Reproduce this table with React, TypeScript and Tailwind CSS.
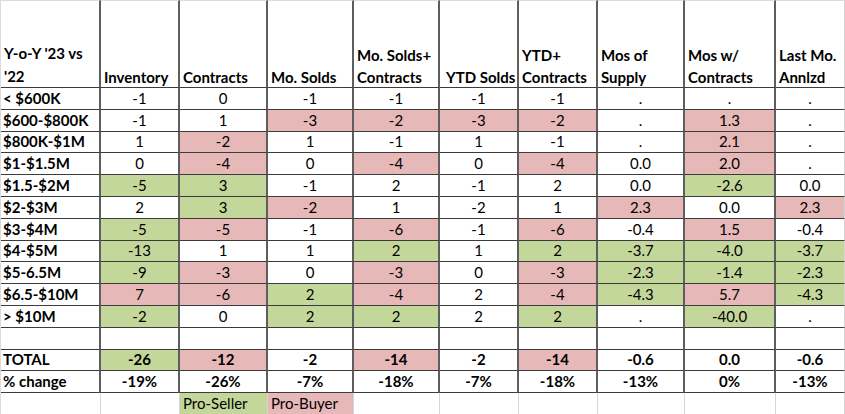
type Fill = '' | 'P' | 'G';
type Cell = [string, Fill];

const headers = [
  'Inventory',
  'Contracts',
  'Mo. Solds',
  'Mo. Solds+\nContracts',
  'YTD Solds',
  'YTD+\nContracts',
  'Mos of\nSupply',
  'Mos w/\nContracts',
  'Last Mo.\nAnnlzd',
];

const rows: { label: string; cells: Cell[]; bold?: boolean }[] = [
  { label: '< $600K', cells: [['-1', ''], ['0', ''], ['-1', ''], ['-1', ''], ['-1', ''], ['-1', ''], ['.', ''], ['.', ''], ['.', '']] },
  { label: '$600-$800K', cells: [['-1', ''], ['1', ''], ['-3', 'P'], ['-2', 'P'], ['-3', 'P'], ['-2', 'P'], ['.', ''], ['1.3', 'P'], ['.', '']] },
  { label: '$800K-$1M', cells: [['1', ''], ['-2', 'P'], ['1', ''], ['-1', ''], ['1', ''], ['-1', ''], ['.', ''], ['2.1', 'P'], ['.', '']] },
  { label: '$1-$1.5M', cells: [['0', ''], ['-4', 'P'], ['0', ''], ['-4', 'P'], ['0', ''], ['-4', 'P'], ['0.0', ''], ['2.0', 'P'], ['.', '']] },
  { label: '$1.5-$2M', cells: [['-5', 'G'], ['3', 'G'], ['-1', ''], ['2', ''], ['-1', ''], ['2', ''], ['0.0', ''], ['-2.6', 'G'], ['0.0', '']] },
  { label: '$2-$3M', cells: [['2', ''], ['3', 'G'], ['-2', 'P'], ['1', ''], ['-2', ''], ['1', ''], ['2.3', 'P'], ['0.0', ''], ['2.3', 'P']] },
  { label: '$3-$4M', cells: [['-5', 'G'], ['-5', 'P'], ['-1', ''], ['-6', 'P'], ['-1', ''], ['-6', 'P'], ['-0.4', ''], ['1.5', 'P'], ['-0.4', '']] },
  { label: '$4-$5M', cells: [['-13', 'G'], ['1', ''], ['1', ''], ['2', 'G'], ['1', ''], ['2', 'G'], ['-3.7', 'G'], ['-4.0', 'G'], ['-3.7', 'G']] },
  { label: '$5-6.5M', cells: [['-9', 'G'], ['-3', 'P'], ['0', ''], ['-3', 'P'], ['0', ''], ['-3', 'P'], ['-2.3', 'G'], ['-1.4', 'G'], ['-2.3', 'G']] },
  { label: '$6.5-$10M', cells: [['7', 'P'], ['-6', 'P'], ['2', 'G'], ['-4', 'P'], ['2', ''], ['-4', 'P'], ['-4.3', 'G'], ['5.7', 'P'], ['-4.3', 'G']] },
  { label: '> $10M', cells: [['-2', 'G'], ['0', ''], ['2', 'G'], ['2', 'G'], ['2', ''], ['2', 'G'], ['.', ''], ['-40.0', 'G'], ['.', '']] },
  { label: '', cells: [['', ''], ['', ''], ['', ''], ['', ''], ['', ''], ['', ''], ['', ''], ['', ''], ['', '']] },
  { label: 'TOTAL', bold: true, cells: [['-26', 'G'], ['-12', 'P'], ['-2', ''], ['-14', 'P'], ['-2', ''], ['-14', 'P'], ['-0.6', ''], ['0.0', ''], ['-0.6', '']] },
  { label: '% change', bold: true, cells: [['-19%', ''], ['-26%', ''], ['-7%', ''], ['-18%', ''], ['-7%', ''], ['-18%', ''], ['-13%', ''], ['0%', ''], ['-13%', '']] },
];

const fills: Record<Fill, string> = {
  '': 'bg-white',
  P: 'bg-[#e6b8b7]',
  G: 'bg-[#c4d79b]',
};

const cellBase = 'border-b border-b-[#3c3c3c] border-r-2 border-r-[#5e5e5e]';
const lastCell = 'border-b border-b-[#3c3c3c] border-r border-r-[#d4d4d4]';

export default function App() {
  return (
    <div
      className="w-[845px] h-[414px] bg-white overflow-hidden border-l border-[#dcdcdc] text-[15px] text-black"
      style={{ fontFamily: 'Lato, "Liberation Sans", sans-serif' }}
    >
      <div className="grid grid-cols-[100px_79px_88px_86px_86px_79px_79px_87px_91px_69px] grid-rows-[88px_repeat(14,21.8px)_1fr] h-full">
        {/* header */}
        <div className={`${cellBase} border-t border-t-[#dcdcdc] flex items-end pl-[3px] font-bold leading-[23px]`}>
          <span className="relative top-[1px]">Y-o-Y '23 vs '22</span>
        </div>
        {headers.map((h, i) => (
          <div
            key={h}
            className={`${i === headers.length - 1 ? lastCell : cellBase} border-t border-t-[#dcdcdc] flex items-end ${
              h === 'YTD Solds' ? 'pl-[6px]' : 'pl-[3px]'
            } font-bold leading-[22px] whitespace-pre-line`}
          >
            <span className="relative top-[1px]">{h}</span>
          </div>
        ))}

        {/* body */}
        {rows.map((r, ri) => (
          <div key={ri} className="contents">
            <div className={`${cellBase} pl-[2px] flex items-center font-bold leading-none`}>{r.label}</div>
            {r.cells.map(([v, f], ci) => (
              <div
                key={ci}
                className={`${ci === r.cells.length - 1 ? lastCell : cellBase} ${fills[f]} flex items-center justify-center leading-none ${
                  r.bold ? 'font-bold' : ''
                }`}
              >
                {v}
              </div>
            ))}
          </div>
        ))}

        {/* legend, under Contracts / Mo. Solds */}
        <div className="border-r border-[#d4d4d4]" />
        <div className="border-r border-[#d4d4d4]" />
        <div className="border-r border-[#d4d4d4] bg-[#c4d79b] pl-[3px] flex items-center leading-none">Pro-Seller</div>
        <div className="border-r border-[#d4d4d4] bg-[#e6b8b7] pl-[3px] flex items-center leading-none">Pro-Buyer</div>
        <div className="border-r border-[#d4d4d4]" />
        <div className="border-r border-[#d4d4d4]" />
        <div className="border-r border-[#d4d4d4]" />
        <div className="border-r border-[#d4d4d4]" />
        <div className="border-r border-[#d4d4d4]" />
        <div className="border-r border-[#d4d4d4]" />
      </div>
    </div>
  );
}
